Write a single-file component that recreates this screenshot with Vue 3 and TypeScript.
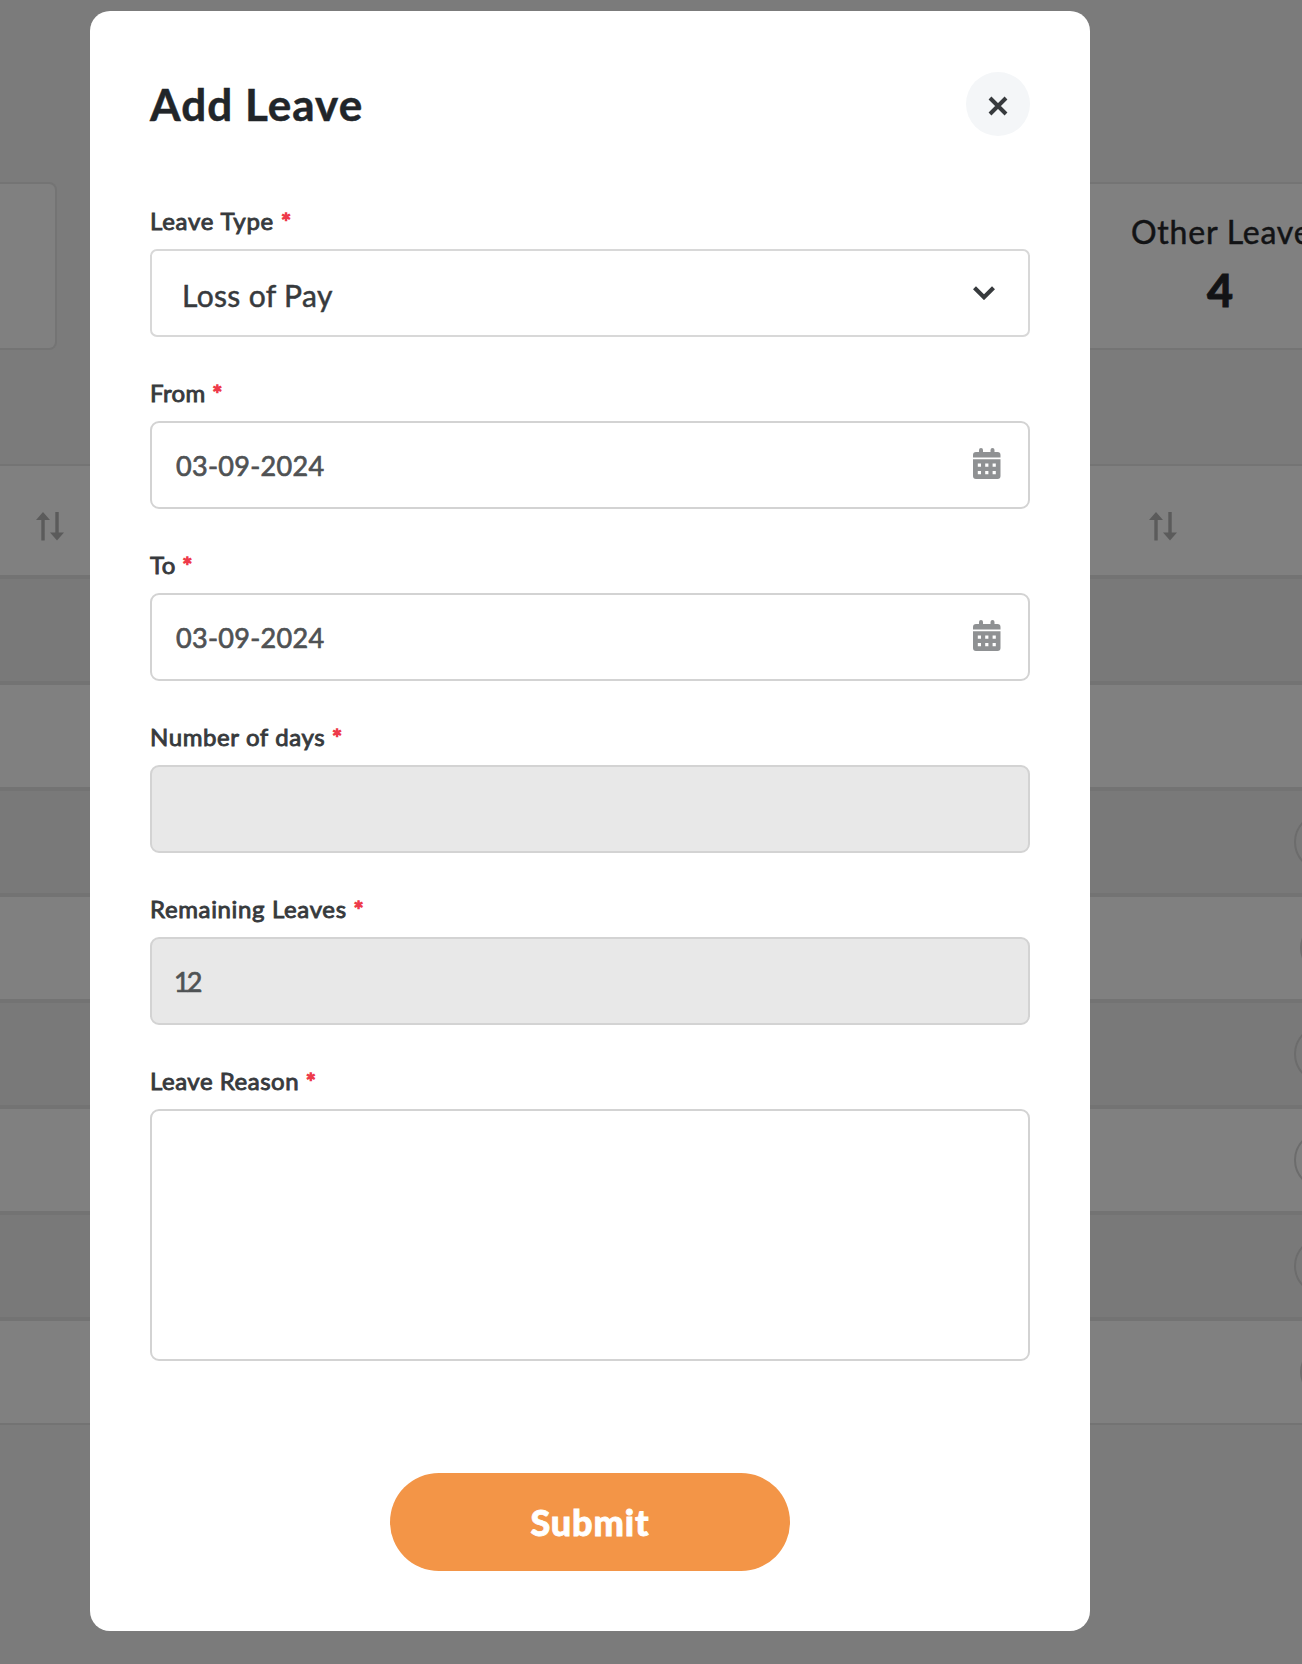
<script setup lang="ts">
interface Field {
  label: string
  kind: 'select' | 'date' | 'readonly' | 'area'
  value: string
  spacing: number
}

const fields: Field[] = [
  { label: 'Leave Type', kind: 'select', value: 'Loss of Pay', spacing: 0.75 },
  { label: 'From', kind: 'date', value: '03-09-2024', spacing: 0.4 },
  { label: 'To', kind: 'date', value: '03-09-2024', spacing: 0.4 },
  { label: 'Number of days', kind: 'readonly', value: '', spacing: 0.6 },
  { label: 'Remaining Leaves', kind: 'readonly', value: '12', spacing: 0.64 },
  { label: 'Leave Reason', kind: 'area', value: '', spacing: 0.52 },
]

const rows: string[] = ['', '', 'outline', 'solid', 'outline', 'outline', 'outline', 'solid']
</script>

<template>
  <div class="screen">
    <div class="page">
      <div class="cards">
        <div class="card first"></div>
        <div class="card other">
          <div class="card-title">Other Leave</div>
          <div class="card-count">4</div>
        </div>
      </div>
      <div class="table">
        <div class="thead">
          <svg v-for="n in 2" :key="n" class="sort" viewBox="0 0 28 30">
            <path d="M7 1 14 9H8.7V29.500H5.300V9H0ZM21 29.500 14 21.500H19.300V1H22.700V21.500H28Z" />
          </svg>
        </div>
        <div v-for="(r, i) in rows" :key="i" class="row">
          <span v-if="r" class="action" :class="r"></span>
        </div>
      </div>
    </div>

    <div class="modal">
      <header>
        <h1>Add Leave</h1>
        <button class="close" aria-label="Close">
          <svg viewBox="0 0 20 20"><path d="M2 2 18 18M18 2 2 18" /></svg>
        </button>
      </header>
      <div v-for="f in fields" :key="f.label" class="field">
        <label :style="{ letterSpacing: f.spacing + 'px' }">{{ f.label }} <span class="star">*</span></label>
        <div class="control" :class="f.kind">
          <span class="value">{{ f.value }}</span>
          <svg v-if="f.kind === 'select'" class="chevron" viewBox="0 0 22 14">
            <path d="M1.500 1.800 11 11.200 20.500 1.800" />
          </svg>
          <svg v-if="f.kind === 'date'" class="calendar" viewBox="0 0 28 31">
            <path d="M6 3V2a2 2 0 0 1 4 0v2h7.500V2a2 2 0 0 1 4 0v2H24.500a3 3 0 0 1 3 3v2.500H0V7a3 3 0 0 1 3-3h3Z" />
            <path fill-rule="evenodd" d="M0 11.200H27.500V28a3 3 0 0 1-3 3H3a3 3 0 0 1-3-3ZM4.800 15.500v3.200H8v-3.200ZM12.200 15.500v3.200h3.200v-3.200ZM19.600 15.500v3.200h3.200v-3.200ZM4.800 23v3.200H8V23ZM12.200 23v3.200h3.200V23ZM19.600 23v3.200h3.200V23Z" />
          </svg>
        </div>
      </div>
      <button class="submit">Submit</button>
    </div>
  </div>
</template>

<style>
body {
  margin: 0;
  overflow: hidden;
}
</style>

<style scoped>
.screen {
  position: relative;
  width: 1302px;
  height: 1664px;
  overflow: hidden;
  background: #7b7b7b;
  font-family: Lato, 'Open Sans', sans-serif;
}
.page {
  padding-top: 182px;
}
.cards {
  display: flex;
  justify-content: space-between;
  height: 168px;
}
.card {
  box-sizing: border-box;
  border: 2px solid #747474;
  background: #808080;
}
.first {
  width: 57px;
  border-left: 0;
  border-radius: 0 8px 8px 0;
}
.other {
  width: 242px;
  border-right: 0;
  padding: 28px 0 0 69px;
  color: #121315;
  white-space: nowrap;
}
.card-title {
  font-size: 32px;
  line-height: 40px;
  letter-spacing: 0.8px;
  -webkit-text-stroke: 0.5px currentColor;
}
.card-count {
  width: 178px;
  margin-top: 12px;
  font-size: 45px;
  line-height: 52px;
  font-weight: 900;
  text-align: center;
  -webkit-text-stroke: 0.8px currentColor;
}
.table {
  margin-top: 114px;
  border-top: 2px solid #747474;
}
.thead {
  display: flex;
  box-sizing: border-box;
  height: 113px;
  padding: 45px 125px 0 36px;
  justify-content: space-between;
  align-items: flex-start;
  background: #808080;
  border-bottom: 4px solid #737373;
}
.sort {
  width: 28px;
  height: 30px;
  fill: #5b5b5b;
}
.row {
  display: flex;
  box-sizing: border-box;
  height: 106px;
  align-items: center;
  padding-left: 1294px;
  border-bottom: 4px solid #737373;
  background: #808080;
}
.row:nth-child(even) {
  background: #797979;
}
.row:last-child {
  height: 104px;
  border-bottom-width: 2px;
}
.action {
  box-sizing: border-box;
  flex: none;
  width: 58px;
  height: 58px;
  border-radius: 50%;
}
.outline {
  border: 2px solid #6c6c6c;
}
.solid {
  margin-left: 6px;
  background: #6c6c6c;
}
.modal {
  position: absolute;
  left: 90px;
  top: 11px;
  box-sizing: border-box;
  width: 1000px;
  height: 1620px;
  padding: 61px 60px 60px;
  border-radius: 20px;
  background: #fff;
}
header {
  display: flex;
  justify-content: space-between;
  height: 64px;
  margin-bottom: 70px;
}
h1 {
  margin: 0;
  font-size: 44px;
  line-height: 64px;
  font-weight: 700;
  letter-spacing: 1.05px;
  color: #212529;
  -webkit-text-stroke: 0.5px currentColor;
}
.close {
  display: flex;
  align-items: center;
  justify-content: center;
  width: 64px;
  height: 64px;
  padding: 4px 0 0;
  border: 0;
  border-radius: 50%;
  background: #f4f6f8;
}
.close svg {
  width: 20px;
  height: 20px;
  fill: none;
  stroke: #373a3d;
  stroke-width: 4;
}
.field {
  margin-bottom: 41px;
}
label {
  display: block;
  height: 30px;
  margin-bottom: 13px;
  font-size: 24px;
  line-height: 30px;
  color: #373a3d;
  -webkit-text-stroke: 0.9px currentColor;
}
.star {
  color: #ee3a4a;
  -webkit-text-stroke: 1.3px currentColor;
}
.control {
  display: flex;
  box-sizing: border-box;
  height: 88px;
  padding: 0 27px 0 24px;
  align-items: center;
  justify-content: space-between;
  border: 2px solid #d3d3d3;
  border-radius: 9px;
  font-size: 27px;
  letter-spacing: 0.3px;
  color: #4f5254;
  -webkit-text-stroke: 0.7px currentColor;
}
.select {
  padding: 0 33px 0 30px;
  border-radius: 7px;
  border-color: #d8d8d8;
  font-size: 30px;
  letter-spacing: 0.35px;
  color: #373a3d;
  -webkit-text-stroke: 0.5px currentColor;
}
.select .value {
  padding-top: 4px;
}
.readonly {
  background: #e8e8e8;
  letter-spacing: -3px;
  padding-left: 22px;
}
.area {
  height: 252px;
}
.chevron {
  width: 22px;
  height: 14px;
  fill: none;
  stroke: #373a3d;
  stroke-width: 4.2;
}
.calendar {
  width: 28px;
  height: 31px;
  margin-bottom: 3px;
  fill: #8f9193;
  stroke: none;
}
.submit {
  display: block;
  width: 400px;
  height: 98px;
  margin: 112px auto 0;
  padding: 0;
  border: 0;
  border-radius: 49px;
  background: #f39547;
  color: #fff;
  font: 900 36px/96px Lato, sans-serif;
  letter-spacing: 0.9px;
  -webkit-text-stroke: 0.8px currentColor;
}
</style>
